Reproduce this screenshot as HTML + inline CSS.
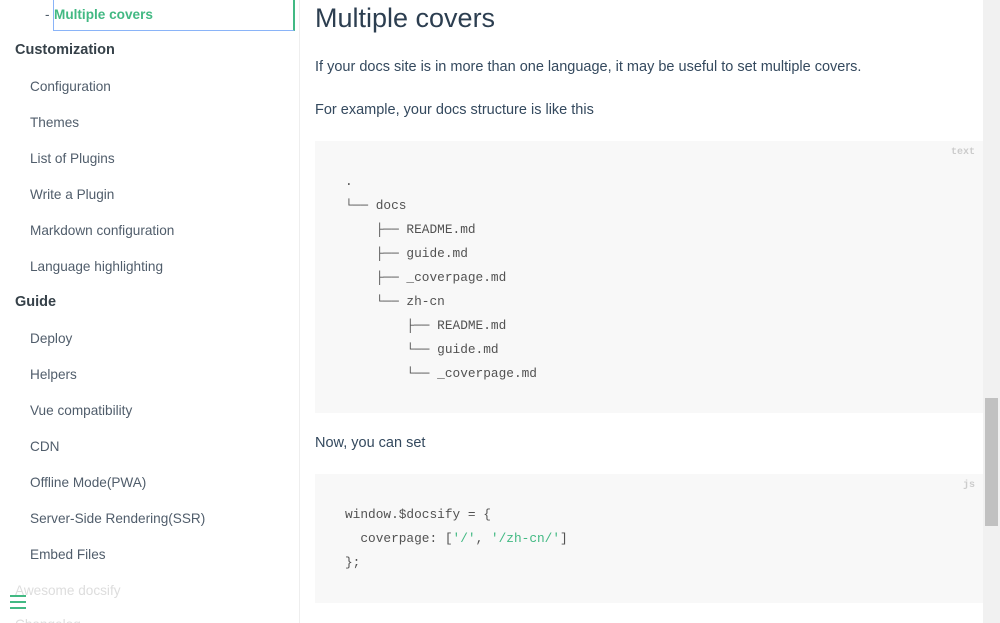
<!DOCTYPE html>
<html><head><style>
*{margin:0;padding:0;box-sizing:border-box}
body{width:1000px;height:623px;overflow:hidden;background:#fff;font-family:"Liberation Sans",sans-serif;position:relative;color:#34495e}
.side{position:absolute;left:0;top:0;width:300px;height:623px;border-right:1px solid #eee;font-size:13.6px;color:#505d6b;overflow:hidden}
.side div{position:absolute;white-space:nowrap}
.h{left:15px;font-weight:bold;color:#364149;font-size:14.5px}
.i{left:30px}
.cur{position:absolute;left:53px;top:0;width:242px;height:31px;border:1px solid #8ab4f8;border-top:none;border-right:2px solid #42b983}
.main{position:absolute;left:315px;top:0;width:668px}
h1{position:absolute;top:3px;font-size:27px;font-weight:normal;color:#2c3e50}
p{position:absolute;font-size:14.5px;color:#34495e;white-space:nowrap}
pre{position:absolute;left:0;width:668px;background:#f8f8f8;font-family:"Liberation Mono",monospace;font-size:12.8px;line-height:24px;color:#525252;padding-left:30px}
.lang{position:absolute;right:8px;top:6px;font-size:10px;color:#ccc;line-height:12px;font-weight:bold}
.s{color:#42b983}
.sb{position:absolute;left:983px;top:0;width:17px;height:623px;background:#f1f1f1}
.th{position:absolute;left:985px;top:398px;width:13px;height:128px;background:#c1c1c1}
</style></head><body>
<div class="side">
<div class="cur"></div>
<div style="left:45px;top:7px;color:#505d6b">-</div>
<div style="left:54px;top:7px;color:#42b983;font-weight:bold">Multiple covers</div>
<div class="h" style="top:42px">Customization</div>
<div class="i" style="top:79px">Configuration</div>
<div class="i" style="top:115px">Themes</div>
<div class="i" style="top:151px">List of Plugins</div>
<div class="i" style="top:187px">Write a Plugin</div>
<div class="i" style="top:223px">Markdown configuration</div>
<div class="i" style="top:259px">Language highlighting</div>
<div class="h" style="top:294px">Guide</div>
<div class="i" style="top:331px">Deploy</div>
<div class="i" style="top:367px">Helpers</div>
<div class="i" style="top:403px">Vue compatibility</div>
<div class="i" style="top:439px">CDN</div>
<div class="i" style="top:475px">Offline Mode(PWA)</div>
<div class="i" style="top:511px">Server-Side Rendering(SSR)</div>
<div class="i" style="top:547px">Embed Files</div>
<div style="left:15px;top:583px;color:#ddd">Awesome docsify</div>
<div style="left:15px;top:617px;color:#ddd">Changelog</div>
<div style="left:10px;top:595px;width:16px;height:2px;background:#42b983"></div>
<div style="left:10px;top:601px;width:16px;height:2px;background:#42b983"></div>
<div style="left:10px;top:607px;width:16px;height:2px;background:#42b983"></div>
</div>
<div class="main">
<h1>Multiple covers</h1>
<p style="top:59px">If your docs site is in more than one language, it may be useful to set multiple covers.</p>
<p style="top:102px">For example, your docs structure is like this</p>
<pre style="top:141px;height:272px;padding-top:29px"><span class="lang">text</span>.
└── docs
    ├── README.md
    ├── guide.md
    ├── _coverpage.md
    └── zh-cn
        ├── README.md
        └── guide.md
        └── _coverpage.md</pre>
<p style="top:435px">Now, you can set</p>
<pre style="top:474px;height:129px;padding-top:29px"><span class="lang">js</span>window.$docsify = {
  coverpage: [<span class="s">'/'</span>, <span class="s">'/zh-cn/'</span>]
};</pre>
</div>
<div class="sb"></div><div class="th"></div>
</body></html>
